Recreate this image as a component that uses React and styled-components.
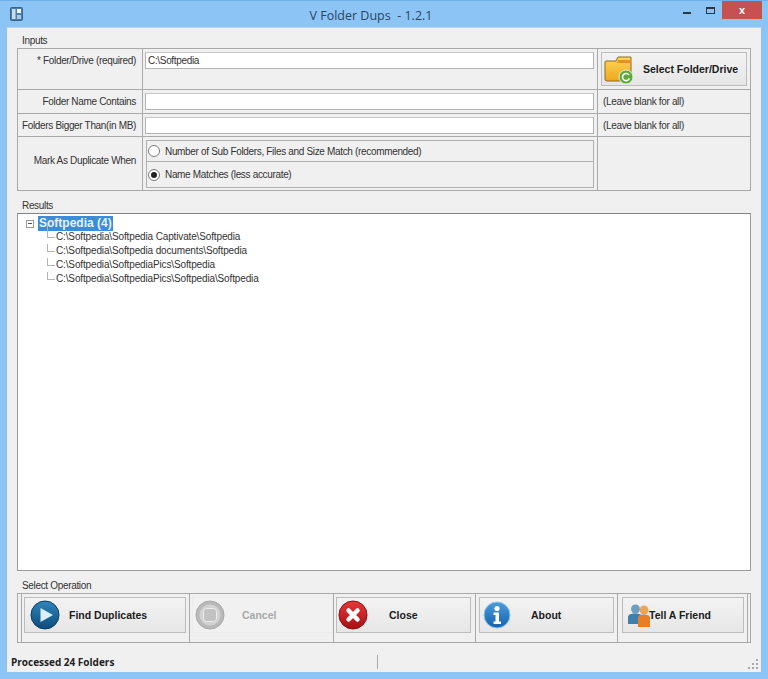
import React from 'react';
import styled, { createGlobalStyle } from 'styled-components';

const GlobalStyle = createGlobalStyle`
  html, body {
    margin: 0;
    padding: 0;
    background: #8cc4f6;
  }
  * { box-sizing: border-box; }
`;

const Window = styled.div`
  width: 768px;
  height: 679px;
  display: flex;
  flex-direction: column;
  overflow: hidden;
  background: #8cc4f6;
  border-top: 1px solid #6fb0e8;
  font-family: "Liberation Sans", Arial, sans-serif;
  font-size: 10px;
  letter-spacing: -0.33px;
  color: #333;
`;

const TitleBar = styled.div`
  height: 26px;
  flex: none;
  display: grid;
  grid-template-columns: 60px 1fr 60px;
  position: relative;
  letter-spacing: 0;
`;

const AppIcon = styled.div`
  padding: 6px 0 0 10px;
`;

const Title = styled.div`
  text-align: center;
  font-family: "Open Sans", sans-serif;
  font-size: 12.5px;
  line-height: 30px;
  color: #2b4560;
  white-space: pre;
  padding-right: 26px;
`;

const WindowButtons = styled.div`
  position: absolute;
  top: 0;
  right: 6px;
  display: flex;
  align-items: flex-start;
`;

const Minimize = styled.div`
  width: 8px;
  height: 2px;
  margin-top: 11px;
  background: #26384c;
`;

const Maximize = styled.div`
  width: 9px;
  height: 7px;
  margin: 6px 7px 0 15px;
  border: 1px solid #26384c;
  border-top-width: 2px;
`;

const CloseBox = styled.div`
  width: 40px;
  height: 18px;
  background: #c75050;
  color: #fff;
  font-size: 11px;
  font-weight: bold;
  line-height: 18px;
  text-align: center;
`;

const Client = styled.div`
  flex: 1;
  margin: 0 7px;
  min-height: 0;
  background: #f0f0f0;
  display: flex;
  flex-direction: column;
  padding: 0 10px;
  border-top: 1px solid #b4d4ec;
`;

const GroupLabel = styled.div`
  padding-left: 5px;
  height: ${p => p.$height}px;
  line-height: 12px;
  flex: none;
  display: flex;
  align-items: flex-end;
  padding-bottom: 1px;
`;

const InputsTable = styled.div`
  display: grid;
  grid-template-columns: 125px 455px 1fr;
  grid-template-rows: 41px 24px 23px 54px;
  height: 143px;
  flex: none;
  border: 1px solid #a9a9a9;
`;

const Cell = styled.div`
  display: flex;
  border-right: ${p => (p.$last ? 'none' : '1px solid #a9a9a9')};
  border-bottom: ${p => (p.$bottom ? 'none' : '1px solid #a9a9a9')};
  padding: ${p => p.$pad || '0'};
  align-items: ${p => p.$align || 'center'};
  min-width: 0;
`;

const FieldLabel = styled(Cell)`
  justify-content: flex-end;
  padding-right: 6px;
  white-space: nowrap;
`;

const TextInput = styled.div`
  width: 449px;
  height: 17px;
  margin-left: 2px;
  background: #fff;
  border: 1px solid #b4b4b4;
  border-top-color: #c8c8c8;
  padding-left: 2px;
  line-height: 15px;
`;

const Hint = styled(Cell)`
  padding-left: 5px;
  white-space: nowrap;
`;

const RadioBox = styled.div`
  width: 448px;
  height: 48px;
  margin: 3px 0 0 3px;
  border: 1px solid #b0b0b0;
  display: grid;
  grid-template-rows: 21px 1fr;
`;

const RadioRow = styled.div`
  display: flex;
  align-items: center;
  gap: 5px;
  border-bottom: ${p => (p.$first ? '1px solid #b0b0b0' : 'none')};
`;

const RadioDot = styled.span`
  width: 12px;
  height: 12px;
  margin-left: 1px;
  border-radius: 50%;
  border: 1px solid #7b7b7b;
  background: #fff;
  display: flex;
  align-items: center;
  justify-content: center;
  &::after {
    content: '';
    width: 6px;
    height: 6px;
    border-radius: 50%;
    background: ${p => (p.$on ? '#222' : 'transparent')};
  }
`;

const Button = styled.div`
  display: grid;
  grid-template-columns: ${p => p.$iconCol || 44}px 1fr;
  align-items: center;
  height: ${p => p.$height || 36}px;
  width: ${p => p.$width}px;
  border: 1px solid ${p => (p.$disabled ? '#ececec' : '#bdbdbd')};
  background: ${p => (p.$disabled ? '#f1f1f1' : 'linear-gradient(#f3f3f3, #e6e6e6)')};
  color: ${p => (p.$disabled ? '#a8a8a8' : '#1c1c1c')};
  font-weight: bold;
  font-size: 10.5px;
  letter-spacing: 0;
  white-space: nowrap;
`;

const ButtonIcon = styled.svg`
  display: block;
  margin-left: ${p => p.$left || 5}px;
`;

const ResultsTree = styled.div`
  height: 358px;
  flex: none;
  background: #fff;
  border: 1px solid #9a9a9a;
  border-top-color: #828282;
  padding: 2px 0 0 8px;
  letter-spacing: -0.14px;
`;

const RootRow = styled.div`
  display: flex;
  align-items: center;
  height: 15px;
  margin-bottom: -1px;
  letter-spacing: 0;
`;

const Expander = styled.span`
  width: 8px;
  height: 8px;
  border: 1px solid #9a9a9a;
  position: relative;
  margin-right: 4px;
  &::after {
    content: '';
    position: absolute;
    left: 1px;
    right: 1px;
    top: 2px;
    height: 1px;
    background: #555;
  }
`;

const RootLabel = styled.span`
  background: #3c8dd8;
  color: #e4f1fb;
  font-size: 12px;
  font-weight: bold;
  height: 15px;
  line-height: 15px;
  padding: 0 1px;
`;

const ChildList = styled.div`
  padding: 0 0 0 21px;
`;

const ChildRow = styled.div`
  height: 14px;
  line-height: 14px;
  padding-left: 9px;
  position: relative;
  white-space: nowrap;
  &::before {
    content: '';
    position: absolute;
    left: 0;
    top: ${p => (p.$first ? '-5px' : '0')};
    height: ${p => (p.$first ? '12px' : '7px')};
    border-left: 1px solid #b4b4b4;
  }
  &::after {
    content: '';
    position: absolute;
    left: 0;
    top: 7px;
    width: 8px;
    border-top: 1px solid #b4b4b4;
  }
`;

const OperationBar = styled.div`
  display: grid;
  grid-template-columns: 4px 168px 144px 142px 142px 130px 1fr;
  height: 50px;
  flex: none;
  border: 1px solid #a9a9a9;
`;

const OpCell = styled.div`
  border-right: ${p => (p.$last ? 'none' : '1px solid #a9a9a9')};
  padding: 3px 0 0 ${p => p.$pad || 2}px;
`;

const StatusBar = styled.div`
  height: 21px;
  flex: none;
  margin: 8px -10px 0;
  display: grid;
  grid-template-columns: 371px 1fr;
  align-items: center;
  position: relative;
  background: #f0f0f0;
  letter-spacing: 0;
`;

const StatusText = styled.div`
  padding-left: 4px;
  font-family: "Open Sans", sans-serif;
  font-weight: 700;
  font-size: 10px;
  color: #222;
  border-right: 1px solid #a9a9a9;
  height: 14px;
  line-height: 14px;
`;

const Grip = styled.svg`
  position: absolute;
  right: 2px;
  bottom: 2px;
`;

const BottomBorder = styled.div`
  height: 7px;
  flex: none;
`;

const PlayIcon = () => (
  <ButtonIcon width="30" height="30" viewBox="0 0 30 30">
    <defs>
      <linearGradient id="play" x1="0" y1="0" x2="0" y2="1">
        <stop offset="0" stopColor="#2f86bd" />
        <stop offset="1" stopColor="#0d4a7c" />
      </linearGradient>
    </defs>
    <circle cx="15" cy="15" r="14" fill="url(#play)" stroke="#0b3d66" />
    <path d="M10.5 8 L23 15 L10.5 22 Z" fill="#d9effc" />
  </ButtonIcon>
);

const StopIcon = () => (
  <ButtonIcon width="30" height="30" viewBox="0 0 30 30" $left={2}>
    <circle cx="15" cy="15" r="14" fill="#b9b9b9" stroke="#a8a8a8" />
    <circle cx="15" cy="15" r="10.5" fill="#d2d2d2" />
    <rect x="8.5" y="8.5" width="13" height="13" rx="3" fill="#c2c2c2" stroke="#eeeeee" />
  </ButtonIcon>
);

const CloseIcon = () => (
  <ButtonIcon width="30" height="30" viewBox="0 0 30 30" $left={1}>
    <defs>
      <linearGradient id="closeRed" x1="0" y1="0" x2="0" y2="1">
        <stop offset="0" stopColor="#e8383a" />
        <stop offset="1" stopColor="#a50f14" />
      </linearGradient>
    </defs>
    <circle cx="15" cy="15" r="14" fill="url(#closeRed)" stroke="#8c0e12" />
    <path d="M10.5 10.5 L19.5 19.5 M19.5 10.5 L10.5 19.5" stroke="#fff" strokeWidth="4.5" strokeLinecap="round" />
  </ButtonIcon>
);

const InfoIcon = () => (
  <ButtonIcon width="28" height="30" viewBox="0 0 28 30" $left={3}>
    <defs>
      <linearGradient id="info" x1="0" y1="0" x2="0" y2="1">
        <stop offset="0" stopColor="#4c9bdc" />
        <stop offset="1" stopColor="#1462ac" />
      </linearGradient>
    </defs>
    <circle cx="14" cy="15" r="13" fill="url(#info)" stroke="#8cc4ec" />
    <circle cx="14" cy="8.5" r="2.6" fill="#fff" />
    <path d="M10.5 12.5 H16 V21.5 H18 V24 H10.5 V21.5 H12.5 V15 H10.5 Z" fill="#fff" />
  </ButtonIcon>
);

const FriendsIcon = () => (
  <ButtonIcon width="24" height="26" viewBox="0 0 24 26" $left={5}>
    <circle cx="7.5" cy="7" r="4.5" fill="#6b9fc4" />
    <path d="M0 22 V15 C0 12.5 3 11.5 7 11.5 C11 11.5 14 12.5 14 15 V22 Z" fill="#3f7fae" />
    <circle cx="16" cy="8" r="4.5" fill="#f0a35a" />
    <path d="M10 25 V16 C10 13.5 12.5 12.5 16 12.5 C19.5 12.5 22 13.5 22 16 V25 Z" fill="#e87e26" />
  </ButtonIcon>
);

const FolderIcon = () => (
  <ButtonIcon width="30" height="30" viewBox="0 0 30 30" $left={2}>
    <defs>
      <linearGradient id="folder" x1="0" y1="0" x2="0" y2="1">
        <stop offset="0" stopColor="#fdd75a" />
        <stop offset="1" stopColor="#f0a81c" />
      </linearGradient>
    </defs>
    <path d="M2 7 H12 L14 3 H27 V27 H3 Q1 27 1 25 V8 Q1 7 2 7 Z" fill="url(#folder)" stroke="#8a6a24" />
    <path d="M14 6 H27 V9 H13 Z" fill="#e88f26" />
    <circle cx="22" cy="23" r="7" fill="#5cab38" stroke="#dfeedd" />
    <path d="M25 21 A3.6 3.6 0 1 0 25.4 24.4" fill="none" stroke="#fff" strokeWidth="1.6" />
  </ButtonIcon>
);

const AppGlyph = () => (
  <svg width="13" height="14" viewBox="0 0 13 14" style={{ display: 'block' }}>
    <rect x="0.5" y="0.5" width="12" height="13" rx="1" fill="#4f7fa8" stroke="#3a6488" />
    <rect x="2" y="2" width="3.5" height="10" fill="#c6def2" />
    <rect x="7" y="2" width="4" height="4" fill="#f2f7fb" />
    <rect x="7" y="8" width="4" height="4" fill="#a8cbe6" />
  </svg>
);

const rows = [
  'C:\\Softpedia\\Softpedia Captivate\\Softpedia',
  'C:\\Softpedia\\Softpedia documents\\Softpedia',
  'C:\\Softpedia\\SoftpediaPics\\Softpedia',
  'C:\\Softpedia\\SoftpediaPics\\Softpedia\\Softpedia',
];

const App = () => (
  <Window>
    <GlobalStyle />
    <TitleBar>
      <AppIcon><AppGlyph /></AppIcon>
      <Title>{'V Folder Dups  - 1.2.1'}</Title>
      <div />
      <WindowButtons>
        <Minimize />
        <Maximize />
        <CloseBox>x</CloseBox>
      </WindowButtons>
    </TitleBar>

    <Client>
      <GroupLabel $height={20}>Inputs</GroupLabel>
      <InputsTable>
        <FieldLabel $align="flex-start" $pad="6px 6px 0 0">* Folder/Drive (required)</FieldLabel>
        <Cell $align="flex-start" $pad="3px 0 0 0"><TextInput>C:\Softpedia</TextInput></Cell>
        <Cell $last $pad="0 0 0 3px">
          <Button $width={146} $height={34} $iconCol={41}>
            <FolderIcon />
            <span>Select Folder/Drive</span>
          </Button>
        </Cell>

        <FieldLabel>Folder Name Contains</FieldLabel>
        <Cell><TextInput /></Cell>
        <Hint $last>(Leave blank for all)</Hint>

        <FieldLabel>Folders Bigger Than(in MB)</FieldLabel>
        <Cell><TextInput /></Cell>
        <Hint $last>(Leave blank for all)</Hint>

        <FieldLabel $bottom $pad="0 6px 8px 0">Mark As Duplicate When</FieldLabel>
        <Cell $bottom $align="flex-start">
          <RadioBox>
            <RadioRow $first><RadioDot />Number of Sub Folders, Files and Size Match (recommended)</RadioRow>
            <RadioRow><RadioDot $on />Name Matches (less accurate)</RadioRow>
          </RadioBox>
        </Cell>
        <Cell $last $bottom />
      </InputsTable>

      <GroupLabel $height={22}>Results</GroupLabel>
      <ResultsTree>
        <RootRow>
          <Expander />
          <RootLabel>Softpedia (4)</RootLabel>
        </RootRow>
        <ChildList>
          {rows.map((row, i) => (
            <ChildRow key={row} $first={i === 0}>{row}</ChildRow>
          ))}
        </ChildList>
      </ResultsTree>

      <GroupLabel $height={22}>Select Operation</GroupLabel>
      <OperationBar>
        <OpCell />
        <OpCell>
          <Button $width={162} $iconCol={44}><PlayIcon /><span>Find Duplicates</span></Button>
        </OpCell>
        <OpCell>
          <Button $width={141} $iconCol={49} $disabled><StopIcon /><span>Cancel</span></Button>
        </OpCell>
        <OpCell>
          <Button $width={135} $iconCol={52}><CloseIcon /><span>Close</span></Button>
        </OpCell>
        <OpCell $pad={3}>
          <Button $width={135} $iconCol={51}><InfoIcon /><span>About</span></Button>
        </OpCell>
        <OpCell $pad={4}>
          <Button $width={122} $iconCol={26}><FriendsIcon /><span>Tell A Friend</span></Button>
        </OpCell>
        <OpCell $last />
      </OperationBar>

      <StatusBar>
        <StatusText>Processed 24 Folders</StatusText>
        <div />
        <Grip width="11" height="11" viewBox="0 0 11 11">
          <g fill="#a8a8a8">
            <rect x="8" y="0" width="2" height="2" />
            <rect x="4" y="4" width="2" height="2" />
            <rect x="8" y="4" width="2" height="2" />
            <rect x="0" y="8" width="2" height="2" />
            <rect x="4" y="8" width="2" height="2" />
            <rect x="8" y="8" width="2" height="2" />
          </g>
        </Grip>
      </StatusBar>
    </Client>
    <BottomBorder />
  </Window>
);

export default App;
